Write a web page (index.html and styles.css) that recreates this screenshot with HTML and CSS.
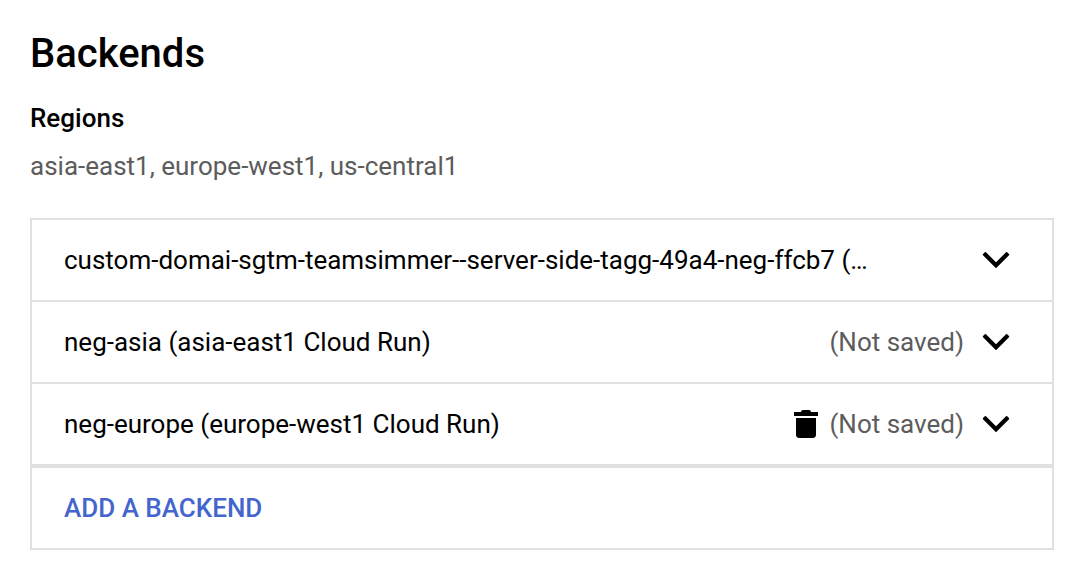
FILE: index.html
```html
<!DOCTYPE html>
<html lang="en">
<head>
<meta charset="utf-8">
<meta name="viewport" content="width=device-width, initial-scale=1">
<title>Backends</title>
<link rel="stylesheet" href="styles.css">
</head>
<body>
<main class="page">
  <h1 class="title">Backends</h1>
  <h2 class="label">Regions</h2>
  <p class="regions">asia-east1, europe-west1, us-central1</p>
  <div class="panel">
    <div class="row">
      <span class="name name-long">custom-domai-sgtm-teamsimmer--server-side-tagg-49a4-neg-ffcb7 (…</span>
      <button class="icon-button" type="button" aria-label="Expand"><svg class="chevron" viewBox="0 0 28 18"><path d="M2.800 1.300Q3.400 .8 4 1.300L14 11.200 24 1.300Q24.600 .8 25.200 1.300L27 3.100Q27.500 3.700 27 4.300L14 17.300 1 4.300Q.5 3.700 1 3.100z"/></svg></button>
    </div>
    <div class="row">
      <span class="name">neg-asia (asia-east1 Cloud Run)</span>
      <span class="status">(Not saved)</span>
      <button class="icon-button" type="button" aria-label="Expand"><svg class="chevron" viewBox="0 0 28 18"><path d="M2.800 1.300Q3.400 .8 4 1.300L14 11.200 24 1.300Q24.600 .8 25.200 1.300L27 3.100Q27.500 3.700 27 4.300L14 17.300 1 4.300Q.5 3.700 1 3.100z"/></svg></button>
    </div>
    <div class="row">
      <span class="name">neg-europe (europe-west1 Cloud Run)</span>
      <button class="icon-button" type="button" aria-label="Delete"><svg class="trash" viewBox="0 0 24 28"><path d="M0 2H7Q7 0 9 0H15Q17 0 17 2H24V6H0zM2 8H22V24.500Q22 28 18.500 28H5.500Q2 28 2 24.500z"/></svg></button>
      <span class="status">(Not saved)</span>
      <button class="icon-button" type="button" aria-label="Expand"><svg class="chevron" viewBox="0 0 28 18"><path d="M2.800 1.300Q3.400 .8 4 1.300L14 11.200 24 1.300Q24.600 .8 25.200 1.300L27 3.100Q27.500 3.700 27 4.300L14 17.300 1 4.300Q.5 3.700 1 3.100z"/></svg></button>
    </div>
    <div class="row add-row">
      <button class="add" type="button">ADD A BACKEND</button>
    </div>
  </div>
</main>
</body>
</html>
```
FILE: styles.css
```css
* { box-sizing: border-box; }
body { margin: 0; background: #fff; color: #000; font: 26px/32px Roboto, sans-serif; }
.page { padding: 28px 16px 28px 30px; }
.title { margin: 0; font-size: 40px; line-height: 52px; font-weight: 500; }
.label { margin: 22px 0 0; font-size: 26px; line-height: 32px; font-weight: 500; }
.regions { margin: 16px 0 36px; color: #5c5c5c; }
.panel { border: 2px solid #e0e0e0; }
.row { display: flex; align-items: center; padding: 24px 42px 24px 32px; border-bottom: 2px solid #e0e0e0; }
.name { flex: 1; min-width: 0; }
.name-long { margin-right: 98px; overflow: hidden; text-overflow: ellipsis; white-space: nowrap; }
.status { margin: 0 18px 0 11px; color: #5c5c5c; }
.icon-button { display: flex; margin: 0; padding: 0; border: 0; background: none; cursor: pointer; }
.icon-button svg { display: block; fill: #000; }
.chevron { width: 28px; height: 18px; }
.trash { width: 24px; height: 28px; }
.add-row { border-top: 2px solid #e0e0e0; border-bottom: 0; }
.add { margin: 0; padding: 0; border: 0; background: none; color: #4365cd; font: inherit; font-weight: 500; cursor: pointer; }
```
